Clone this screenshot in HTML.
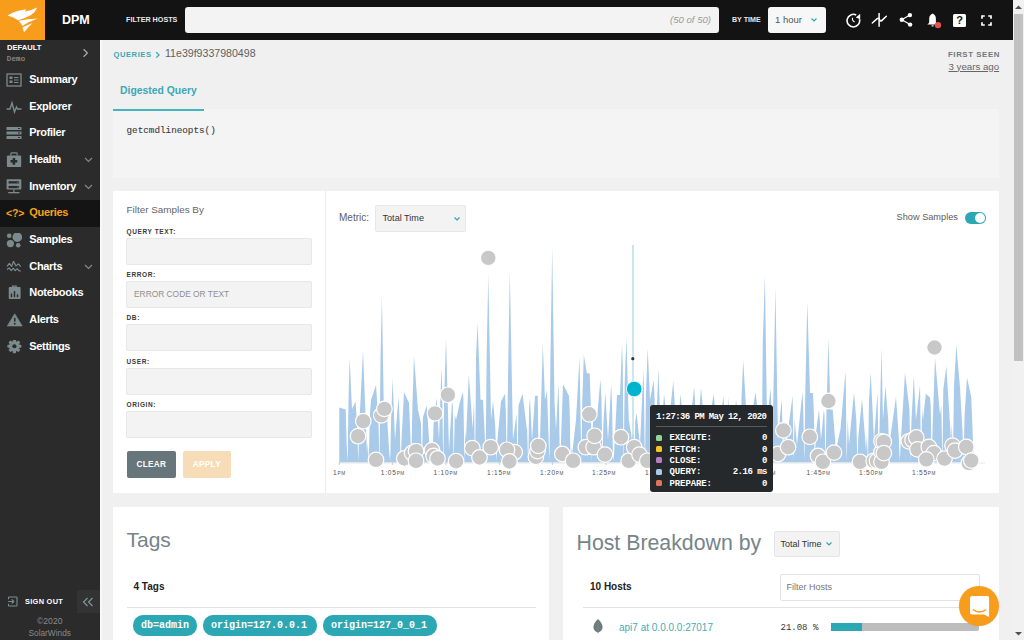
<!DOCTYPE html>
<html><head><meta charset="utf-8">
<style>
*{box-sizing:border-box;margin:0;padding:0}
html,body{width:1024px;height:640px;overflow:hidden;background:#f0f0f0;font-family:"Liberation Sans",sans-serif;}
.a{position:absolute;white-space:nowrap}
#hdr{position:absolute;left:0;top:0;width:1013px;height:40px;background:#131313}
#side{position:absolute;left:0;top:40px;width:100px;height:600px;background:#2b2b2b}
.card{position:absolute;background:#fff}
.lbl{position:absolute;font-size:6.5px;font-weight:bold;letter-spacing:0.62px;color:#3a3a3a;white-space:nowrap}
.inp{position:absolute;left:126px;width:186px;height:27px;background:#f3f3f3;border:1px solid #e7e7e7;border-radius:2px}
.nav{position:absolute;left:0;width:100px;height:27px;color:#fff;font-weight:bold;font-size:11px;letter-spacing:-0.32px}
.nav span{position:absolute;left:29.3px;top:6.3px}
.nav svg{position:absolute;left:6px;top:6px}
.nav svg.chev{position:absolute;left:84px;top:10px}
.tick{position:absolute;top:468.8px;font-size:6.6px;color:#555;white-space:nowrap;letter-spacing:0.75px}
.tick small{font-size:4.7px;letter-spacing:0.6px}
.pill{position:absolute;top:615px;height:21px;background:#2ca8b4;border-radius:10px;color:#fff;font-family:"Liberation Mono",monospace;font-weight:bold;font-size:10px;padding-left:8px;line-height:21px}
</style></head>
<body>
<div id="hdr">
  <div class="a" style="left:0;top:0;width:45px;height:40px;background:#f89c1c">
    <svg width="45" height="40" viewBox="0 0 45 40">
      <path d="M7.5 15.5 Q15 10.5 26 9.2 L25.3 11.6 Q31 10.5 37.3 7.6 Q35.5 12 31 15 Q25 18.5 18 20.2 Q14 17 7.5 15.5Z" fill="#fff"/>
      <path d="M18.5 20.8 Q28 18.8 37.5 18.4 Q33 20.5 28 22.5 Q25 24 22.5 26 Q20.5 23 18.5 20.8Z" fill="#fff"/>
      <path d="M22.5 27.5 Q27 25 32.5 23 Q28 27.5 24 32.2 Q23.5 30 22.5 27.5Z" fill="#fff"/>
    </svg>
  </div>
  <div class="a" style="left:62px;top:12.5px;color:#fff;font-size:12.5px;font-weight:bold;">DPM</div>
  <div class="a" style="left:126px;top:15px;color:#e8e8e8;font-size:7.2px;font-weight:bold;">FILTER HOSTS</div>
  <div class="a" style="left:185px;top:7px;width:534px;height:26px;background:#f3f3f3;border-radius:3px"></div>
  <div class="a" style="left:670px;top:14px;color:#9a9a9a;font-size:9.6px;font-style:italic">(50 of 50)</div>
  <div class="a" style="left:732px;top:15.8px;color:#e8e8e8;font-size:7.1px;font-weight:bold;">BY TIME</div>
  <div class="a" style="left:768px;top:7px;width:58px;height:26px;background:#f7f7f7;border-radius:3px"></div>
  <div class="a" style="left:775px;top:14px;color:#555;font-size:9.5px">1 hour</div>
  <svg class="a" style="left:810px;top:16.8px" width="8" height="6" viewBox="0 0 8 6"><path d="M1.5 1.5 L4 4 L6.5 1.5" stroke="#2ca8b4" stroke-width="1.2" fill="none"/></svg>
  <!-- icons -->
  <svg class="a" style="left:845px;top:12px" width="16" height="16" viewBox="0 0 16 16">
    <path d="M14.5 7.2 A6.3 6.3 0 1 1 11.2 3" stroke="#fff" stroke-width="1.6" fill="none"/>
    <path d="M10.8 5.6 L15.2 1.8 L15.2 7.2 Z" fill="#fff"/>
    <path d="M7.5 5.8 V7.8 Q7.6 9 9.6 9.9" stroke="#fff" stroke-width="1.1" fill="none"/>
  </svg>
  <svg class="a" style="left:871px;top:12px" width="17" height="16" viewBox="0 0 17 16">
    <path d="M1.3 11 L6.2 6.6 Q7.7 5.4 8.8 8.2 Q9.6 9.8 11 8.4 L15.3 4.3" stroke="#fff" stroke-width="1.5" fill="none" stroke-linecap="round"/>
    <path d="M8.1 1 V14.8" stroke="#fff" stroke-width="1.5"/>
  </svg>
  <svg class="a" style="left:899px;top:12px" width="15" height="16" viewBox="0 0 15 16">
    <circle cx="2.8" cy="7.8" r="2.2" fill="#fff"/><circle cx="10.9" cy="3.1" r="2.2" fill="#fff"/><circle cx="11.1" cy="12.6" r="2.2" fill="#fff"/>
    <path d="M2.8 7.8 L10.9 3.1 M2.8 7.8 L11.1 12.6" stroke="#fff" stroke-width="1.2"/>
  </svg>
  <svg class="a" style="left:925px;top:12px" width="18" height="17" viewBox="0 0 18 17">
    <path d="M7.6 1.5 C6 2.3 4.3 3.5 4.2 6.5 L4.2 10 Q4 11.5 2.2 12.6 H12.8 Q11 11.5 10.9 10 L10.9 6.5 C10.8 3.5 9.2 2.3 7.6 1.5Z" fill="#fff"/>
    <path d="M6.6 12.6 H8.6 V14.6 H6.6Z" fill="#bbb"/>
    <circle cx="13" cy="13.1" r="3.2" fill="#e8514f"/>
  </svg>
  <div class="a" style="left:953px;top:14px;width:13px;height:12.5px;background:#fff;border-radius:1.5px;color:#131313;font-weight:bold;font-size:11px;line-height:13px;text-align:center">?</div>
  <svg class="a" style="left:980.5px;top:14.5px" width="11" height="11" viewBox="0 0 11 11">
    <path d="M1 3.8 V1 H3.8 M7.2 1 H10 V3.8 M10 7.2 V10 H7.2 M3.8 10 H1 V7.2" stroke="#fff" stroke-width="1.7" fill="none"/>
  </svg>
</div>
<!-- scrollbar -->
<div class="a" style="left:1013px;top:0;width:11px;height:640px;background:#f1f1f1"></div>
<div class="a" style="left:1014px;top:14px;width:9px;height:347px;background:#c1c1c1"></div>
<svg class="a" style="left:1013px;top:3px" width="11" height="8"><path d="M2 6 L5.5 2.5 L9 6Z" fill="#505050"/></svg>
<svg class="a" style="left:1013px;top:630px" width="11" height="8"><path d="M2 2 L5.5 5.5 L9 2Z" fill="#505050"/></svg>
<div id="side">
  <div class="a" style="left:7px;top:3px;color:#fff;font-size:7.6px;font-weight:bold">DEFAULT</div>
  <div class="a" style="left:6.8px;top:15px;color:#8e8e8e;font-size:7.4px;font-family:'Liberation Mono',monospace;letter-spacing:0.2px;-webkit-text-stroke:0.2px #8e8e8e">Demo</div>
  <svg class="a" style="left:82px;top:8px" width="8" height="10"><path d="M1.6 1.3 L5.4 5 L1.6 8.7" stroke="#aaa" stroke-width="1.2" fill="none"/></svg>
</div>
<!-- nav items (page coords) -->
<div class="nav" style="top:67px">
  <svg width="16" height="14" viewBox="0 0 16 14"><rect x="1" y="1" width="14" height="12" fill="none" stroke="#7b8a8d" stroke-width="1.3"/><rect x="3.5" y="3.5" width="3" height="2.5" fill="#7b8a8d"/><rect x="3.5" y="7.5" width="3" height="2.5" fill="#7b8a8d"/><path d="M8 4.5 H12.5 M8 7 H12.5 M8 9.5 H12.5" stroke="#7b8a8d" stroke-width="1"/></svg>
  <span>Summary</span></div>
<div class="nav" style="top:94px">
  <svg width="16" height="14" viewBox="0 0 16 14"><path d="M0.5 9 H4 L6 3 L8.5 12 L10.5 7 L11.5 9 H15.5" stroke="#7b8a8d" stroke-width="1.4" fill="none"/></svg>
  <span>Explorer</span></div>
<div class="nav" style="top:120px">
  <svg width="16" height="14" viewBox="0 0 16 14"><rect x="0.5" y="1" width="15" height="3" fill="#7b8a8d"/><rect x="0.5" y="5.5" width="15" height="3" fill="#7b8a8d"/><rect x="0.5" y="10" width="15" height="3" fill="#7b8a8d"/><path d="M12 2.5 H14 M12 7 H14 M12 11.5 H14" stroke="#2b2b2b" stroke-width="1"/></svg>
  <span>Profiler</span></div>
<div class="nav" style="top:147px">
  <svg width="16" height="17" viewBox="0 0 16 17" style="top:5px"><rect x="0.9" y="3.4" width="14.3" height="11.7" rx="1.2" fill="#7b8a8d"/><path d="M4.9 3.6 V1.6 Q4.9 0.9 5.6 0.9 H10.4 Q11.1 0.9 11.1 1.6 V3.6" stroke="#7b8a8d" stroke-width="1.2" fill="none"/><path d="M7.9 5.9 V12.7 M4.5 9.3 H11.3" stroke="#2b2b2b" stroke-width="2.6"/></svg>
  <span>Health</span>
  <svg class="chev" width="9" height="6" viewBox="0 0 9 6"><path d="M1 1 L4.5 4.5 L8 1" stroke="#8a8a8a" stroke-width="1.1" fill="none"/></svg></div>
<div class="nav" style="top:174px">
  <svg width="16" height="16" viewBox="0 0 16 16" style="top:5px"><rect x="0.6" y="0.3" width="14.7" height="10.1" rx="0.6" fill="#7b8a8d"/><rect x="2.6" y="2.2" width="10.5" height="2.3" fill="#2b2b2b"/><rect x="2.6" y="6.9" width="10.5" height="2.3" fill="#2b2b2b"/><circle cx="12" cy="3.35" r="0.6" fill="#7b8a8d"/><circle cx="12" cy="8.05" r="0.6" fill="#7b8a8d"/><path d="M7.9 10.4 V13" stroke="#7b8a8d" stroke-width="1.2"/><rect x="2.2" y="13" width="11.3" height="1.3" fill="#7b8a8d"/></svg>
  <span>Inventory</span>
  <svg class="chev" width="9" height="6" viewBox="0 0 9 6"><path d="M1 1 L4.5 4.5 L8 1" stroke="#8a8a8a" stroke-width="1.1" fill="none"/></svg></div>
<div class="nav" style="top:200px;height:26.5px;background:#141414;color:#f7a11b">
  <div class="a" style="left:6px;top:6.5px;font-size:10.5px;font-weight:bold;color:#f7a11b;letter-spacing:-0.2px">&lt;?&gt;</div>
  <span>Queries</span></div>
<div class="nav" style="top:227px">
  <svg width="16" height="16" viewBox="0 0 16 16"><circle cx="11.3" cy="4.2" r="4.8" fill="#7b8a8d"/><circle cx="3.2" cy="2.8" r="2.3" fill="#7b8a8d"/><circle cx="4.4" cy="10.6" r="3.6" fill="#7b8a8d"/><circle cx="12.2" cy="12.3" r="2.3" fill="#7b8a8d"/></svg>
  <span>Samples</span></div>
<div class="nav" style="top:254px">
  <svg width="16" height="14" viewBox="0 0 16 14"><path d="M1 6.3 L3.4 3.5 L5.7 6.3 L7.4 1.4 L10 5.9 L12.4 3.9 L14.7 6.7" stroke="#7b8a8d" stroke-width="1.2" fill="none" stroke-linejoin="round"/><path d="M1 9.4 L3.2 8 L5.3 10.6 L7.3 8.2 L9.2 10.6 L11.2 8.6 L12.9 10.6 L14.7 11.2" stroke="#7b8a8d" stroke-width="1.2" fill="none" stroke-linejoin="round"/></svg>
  <span>Charts</span>
  <svg class="chev" width="9" height="6" viewBox="0 0 9 6"><path d="M1 1 L4.5 4.5 L8 1" stroke="#8a8a8a" stroke-width="1.1" fill="none"/></svg></div>
<div class="nav" style="top:280px">
  <svg width="16" height="15" viewBox="0 0 16 15" style="top:5px"><rect x="2.75" y="2.1" width="11.85" height="11.9" rx="1" fill="#7b8a8d"/><path d="M6.5 2.3 V1.2 H10.2 V2.3" stroke="#7b8a8d" stroke-width="1.2" fill="none"/><path d="M5.5 12.3 V8.5 M8.5 12.3 V6 M11.5 12.3 V9.2" stroke="#2b2b2b" stroke-width="1.4"/></svg>
  <span>Notebooks</span></div>
<div class="nav" style="top:307px">
  <svg width="18" height="15" viewBox="0 0 18 15"><path d="M8.75 0.75 L16.25 13 H1.25Z" fill="#7b8a8d" stroke="#7b8a8d" stroke-width="0.6" stroke-linejoin="round"/><path d="M8.75 4.8 V8.6" stroke="#2b2b2b" stroke-width="1.6"/><circle cx="8.75" cy="10.7" r="0.95" fill="#2b2b2b"/></svg>
  <span>Alerts</span></div>
<div class="nav" style="top:334px">
  <svg width="17" height="15" viewBox="0 0 17 15"><g transform="translate(8.4 6.25)"><circle r="5.2" fill="#7b8a8d"/><rect x="-1.6" y="-6.9" width="3.2" height="13.8" rx="0.6" fill="#7b8a8d" transform="rotate(0)"/><rect x="-1.6" y="-6.9" width="3.2" height="13.8" rx="0.6" fill="#7b8a8d" transform="rotate(45)"/><rect x="-1.6" y="-6.9" width="3.2" height="13.8" rx="0.6" fill="#7b8a8d" transform="rotate(90)"/><rect x="-1.6" y="-6.9" width="3.2" height="13.8" rx="0.6" fill="#7b8a8d" transform="rotate(135)"/><circle r="2.1" fill="#2b2b2b"/></g></svg>
  <span>Settings</span></div>
<!-- bottom -->
<svg class="a" style="left:7px;top:596px" width="12" height="12" viewBox="0 0 12 12"><path d="M1.5 3.3 V1.6 Q1.5 1 2.1 1 H9.4 Q10 1 10 1.6 V9.4 Q10 10 9.4 10 H2.1 Q1.5 10 1.5 9.4 V7.7" stroke="#7f8d90" stroke-width="1.1" fill="none"/><path d="M1.2 5.5 H6.8 M4.7 3.4 L6.8 5.5 L4.7 7.6" stroke="#7f8d90" stroke-width="1.1" fill="none"/></svg>
<div class="a" style="left:25px;top:597px;color:#fff;font-size:7.4px;font-weight:bold;letter-spacing:0.3px">SIGN OUT</div>
<div class="a" style="left:77px;top:590px;width:23px;height:23px;background:#333"></div>
<svg class="a" style="left:82px;top:596px" width="12" height="12" viewBox="0 0 12 12"><path d="M5.5 2 L1.5 6 L5.5 10 M10.5 2 L6.5 6 L10.5 10" stroke="#8a9799" stroke-width="1.1" fill="none"/></svg>
<div class="a" style="left:37px;top:616px;color:#8a8a8a;font-size:8.6px">©2020</div>
<div class="a" style="left:28.5px;top:627.5px;color:#8a8a8a;font-size:8.3px">SolarWinds</div>
<!-- main left edge line -->
<div class="a" style="left:100px;top:40px;width:2px;height:600px;background:#f8f8f8"></div>
<div class="a" style="left:113.5px;top:49.8px;color:#3aa8b6;font-size:7.6px;font-weight:bold;letter-spacing:0.55px">QUERIES</div>
<svg class="a" style="left:155px;top:51px" width="6" height="8" viewBox="0 0 6 8"><path d="M1.2 1.2 L4 3.9 L1.2 6.6" stroke="#3aa8b6" stroke-width="1.3" fill="none"/></svg>
<div class="a" style="left:165px;top:47.3px;color:#5f5f5f;font-size:10.6px">11e39f9337980498</div>
<div class="a" style="left:948px;top:50px;color:#6b7a80;font-size:7.8px;font-weight:bold;letter-spacing:0.6px">FIRST SEEN</div>
<div class="a" style="left:948.5px;top:60.5px;color:#666;font-size:9.7px;text-decoration:underline">3 years ago</div>
<div class="a" style="left:120px;top:84.5px;color:#3aa8b6;font-size:10.4px;font-weight:bold">Digested Query</div>
<div class="a" style="left:113px;top:109px;width:886px;height:69px;background:#f4f4f4"></div>
<div class="a" style="left:113px;top:109px;width:91px;height:2px;background:#44b4c0"></div>
<div class="a" style="left:126.5px;top:125px;color:#3c3c3c;font-size:9.3px;-webkit-text-stroke:0.1px #3c3c3c;font-family:'Liberation Mono',monospace">getcmdlineopts()</div>

<!-- filter card -->
<div class="card" style="left:113px;top:191px;width:886px;height:302px"></div>
<div class="a" style="left:325px;top:191px;width:1px;height:302px;background:#ececec"></div>
<div class="a" style="left:126.5px;top:203.5px;color:#666;font-size:9.9px">Filter Samples By</div>
<div class="lbl" style="left:126.5px;top:227.8px">QUERY TEXT:</div>
<div class="inp" style="top:238px"></div>
<div class="lbl" style="left:126.5px;top:271.2px">ERROR:</div>
<div class="inp" style="top:281px"></div>
<div class="a" style="left:134px;top:289.2px;color:#8f8f8f;font-size:8.4px">ERROR CODE OR TEXT</div>
<div class="lbl" style="left:126.5px;top:314.3px">DB:</div>
<div class="inp" style="top:324px"></div>
<div class="lbl" style="left:126.5px;top:357.6px">USER:</div>
<div class="inp" style="top:368px"></div>
<div class="lbl" style="left:126.5px;top:400.8px">ORIGIN:</div>
<div class="inp" style="top:411px"></div>
<div class="a" style="left:126.6px;top:451px;width:49.4px;height:27px;background:#66767b;border-radius:2px;color:#fff;font-size:8.2px;font-weight:bold;text-align:center;line-height:28.6px;letter-spacing:0.3px">CLEAR</div>
<div class="a" style="left:182.6px;top:451.2px;width:48.6px;height:27px;background:#f6ddb8;border-radius:2px;color:#fff;font-size:8.2px;font-weight:bold;text-align:center;line-height:28.6px;letter-spacing:0.3px">APPLY</div>

<div class="a" style="left:339px;top:212px;color:#606060;font-size:10px">Metric:</div>
<div class="a" style="left:375px;top:204.5px;width:91px;height:27px;background:#f3f3f3;border:1px solid #e7e7e7;border-radius:2px"></div>
<div class="a" style="left:382.5px;top:212.5px;color:#333;font-size:9.1px">Total Time</div>
<svg class="a" style="left:452.8px;top:215.5px" width="8" height="6" viewBox="0 0 8 6"><path d="M1.5 1.5 L4 4 L6.5 1.5" stroke="#2ca8b4" stroke-width="1.2" fill="none"/></svg>
<div class="a" style="left:896.6px;top:212.3px;color:#5c5c5c;font-size:9.2px">Show Samples</div>
<div class="a" style="left:964.5px;top:211.7px;width:21.6px;height:12.4px;background:#2ca8b4;border-radius:6.2px"></div>
<div class="a" style="left:974.9px;top:212.6px;width:10.5px;height:10.5px;background:#fff;border-radius:5.25px"></div>
<svg class="a" style="left:0;top:0" width="1024" height="640" viewBox="0 0 1024 640">
<path d="M339.3 462.5 L339.30 407.5 L345.70 409.5 L346.58 442.3 L347.58 461.5 L348.58 397.2 L349.60 358.0 L352.00 409.0 L355.50 401.6 L357.20 425.7 L358.20 461.5 L359.20 426.6 L363.00 350.3 L367.00 454.0 L367.82 442.9 L368.82 461.5 L369.82 415.9 L371.00 400.0 L376.00 385.0 L378.44 421.6 L379.44 461.5 L380.44 363.3 L381.90 295.6 L384.00 420.0 L386.00 400.0 L389.06 449.6 L390.06 461.5 L391.06 421.5 L392.60 378.0 L395.00 440.0 L398.50 396.8 L399.68 421.9 L400.68 461.5 L401.68 436.9 L404.00 392.0 L409.00 403.0 L410.30 433.5 L411.30 461.5 L412.30 409.3 L414.00 356.0 L418.00 410.0 L420.92 422.7 L421.92 461.5 L422.92 417.2 L426.80 405.5 L430.00 455.0 L431.54 441.6 L432.54 461.5 L433.54 424.3 L436.60 397.7 L439.00 440.0 L441.40 368.4 L442.16 387.1 L443.16 461.5 L444.16 398.5 L446.00 338.5 L449.00 450.0 L452.00 401.6 L452.78 405.2 L453.78 461.5 L454.78 414.4 L456.00 420.0 L460.00 401.6 L463.00 392.0 L463.40 398.4 L464.40 461.5 L465.40 430.4 L466.00 440.0 L468.80 374.3 L472.70 429.0 L474.02 400.4 L475.02 461.5 L476.02 357.1 L477.60 322.9 L480.50 399.7 L483.00 399.7 L484.64 432.7 L485.64 461.5 L486.64 357.5 L488.30 274.0 L491.00 420.0 L493.00 401.0 L495.26 425.9 L496.26 461.5 L497.26 442.2 L501.00 401.6 L505.00 393.8 L505.88 414.1 L506.88 461.5 L507.88 386.9 L509.80 271.2 L513.00 440.0 L516.50 413.8 L517.50 461.5 L518.50 405.6 L522.50 393.8 L527.00 430.0 L527.12 428.7 L528.12 461.5 L529.12 407.4 L530.00 398.0 L532.00 440.0 L535.00 395.8 L537.74 395.8 L538.74 461.5 L539.74 434.3 L540.00 440.0 L542.80 343.4 L545.00 400.0 L547.00 390.0 L548.36 430.8 L549.36 461.5 L550.36 363.6 L552.20 246.7 L554.50 401.6 L556.00 430.0 L558.40 384.0 L558.98 405.5 L559.98 461.5 L560.98 441.5 L563.00 384.0 L569.00 396.0 L569.60 407.8 L570.60 461.5 L571.60 447.1 L572.00 455.0 L576.00 420.0 L579.50 356.7 L580.22 396.7 L581.22 461.5 L582.22 402.9 L583.80 354.8 L586.80 373.3 L589.70 373.3 L590.84 406.4 L591.84 461.5 L592.84 425.8 L593.60 413.0 L597.50 413.0 L600.40 379.0 L601.46 399.8 L602.46 461.5 L603.46 422.4 L605.30 392.0 L608.00 440.0 L611.20 384.0 L612.08 406.3 L613.08 461.5 L614.08 453.4 L617.00 395.0 L620.00 395.0 L622.00 344.4 L622.70 363.9 L623.70 461.5 L624.70 381.8 L626.40 337.6 L628.70 419.0 L632.00 440.0 L633.32 432.3 L634.32 461.5 L635.32 420.5 L636.60 413.0 L640.00 445.0 L643.40 370.0 L643.94 386.9 L644.94 461.5 L645.94 395.0 L647.70 348.3 L650.00 400.0 L653.70 380.0 L654.56 398.7 L655.56 461.5 L656.56 415.6 L658.40 368.4 L661.00 440.0 L664.00 394.0 L665.18 404.6 L666.18 461.5 L667.18 422.6 L668.00 430.0 L673.30 381.0 L675.80 420.9 L676.80 461.5 L677.80 429.5 L680.50 394.0 L684.00 430.0 L686.42 436.0 L687.42 461.5 L688.42 436.4 L694.20 387.0 L697.00 440.0 L697.04 439.5 L698.04 461.5 L699.04 413.5 L701.00 388.0 L706.00 440.0 L707.66 430.1 L708.66 461.5 L709.66 418.1 L713.70 394.0 L718.00 440.0 L718.28 437.8 L719.28 461.5 L720.28 421.8 L723.50 396.0 L726.00 440.0 L728.90 396.9 L729.90 461.5 L730.90 412.2 L733.00 440.0 L736.00 400.0 L739.52 426.4 L740.52 461.5 L741.52 397.0 L743.20 360.6 L748.00 440.0 L750.14 426.3 L751.14 461.5 L752.14 413.5 L755.50 392.0 L760.00 430.0 L760.76 406.0 L761.76 461.5 L762.76 342.7 L764.90 275.0 L767.00 420.0 L770.70 388.0 L771.38 407.6 L772.38 461.5 L773.38 393.8 L775.40 287.8 L778.00 440.0 L781.50 400.7 L782.00 405.6 L783.00 461.5 L784.00 425.3 L786.00 445.0 L792.60 395.8 L792.62 396.0 L793.62 461.5 L794.62 418.4 L797.00 445.0 L802.40 392.0 L803.24 407.2 L804.24 461.5 L805.24 396.0 L807.30 301.4 L810.00 392.9 L813.00 392.9 L813.86 413.2 L814.86 461.5 L815.86 433.4 L819.00 409.5 L821.00 440.0 L823.90 409.5 L824.48 415.2 L825.48 461.5 L826.48 411.7 L828.40 338.5 L830.50 410.0 L832.70 409.5 L835.10 439.0 L836.10 461.5 L837.10 444.9 L840.50 429.0 L845.40 372.3 L845.72 378.8 L846.72 461.5 L847.72 419.2 L849.00 445.0 L854.00 392.0 L856.34 420.1 L857.34 461.5 L858.34 436.5 L862.00 398.7 L866.00 450.0 L866.96 434.1 L867.96 461.5 L868.96 401.1 L870.70 372.3 L874.00 440.0 L877.58 392.3 L878.58 461.5 L879.58 426.7 L881.50 348.3 L883.00 420.0 L885.40 386.0 L888.20 418.9 L889.20 461.5 L890.20 438.6 L896.00 396.8 L898.82 437.8 L899.82 461.5 L900.82 441.5 L905.00 372.5 L908.80 403.8 L909.44 411.4 L910.44 461.5 L911.44 421.5 L913.80 376.0 L916.00 420.0 L920.00 385.0 L920.06 385.7 L921.06 461.5 L922.06 409.0 L923.00 420.0 L925.80 393.8 L930.00 397.5 L930.68 406.3 L931.68 461.5 L932.68 424.8 L935.00 357.5 L940.00 415.0 L941.30 404.9 L942.30 461.5 L943.30 389.3 L946.30 366.0 L951.00 440.0 L951.92 423.5 L952.92 461.5 L953.92 387.7 L956.30 345.0 L960.00 387.5 L962.54 431.9 L963.54 461.5 L964.54 415.9 L967.00 377.5 L971.30 397.5 L973.8 462.5Z" fill="#a9cae9"/>
<path d="M347.08 240 L348.08 240 L347.68 455 L347.48 455Z" fill="#fff"/>
<path d="M357.70 240 L358.70 240 L358.30 455 L358.10 455Z" fill="#fff"/>
<path d="M368.32 240 L369.32 240 L368.92 455 L368.72 455Z" fill="#fff"/>
<path d="M378.94 240 L379.94 240 L379.54 455 L379.34 455Z" fill="#fff"/>
<path d="M389.56 240 L390.56 240 L390.16 455 L389.96 455Z" fill="#fff"/>
<path d="M400.18 240 L401.18 240 L400.78 455 L400.58 455Z" fill="#fff"/>
<path d="M410.80 240 L411.80 240 L411.40 455 L411.20 455Z" fill="#fff"/>
<path d="M421.42 240 L422.42 240 L422.02 455 L421.82 455Z" fill="#fff"/>
<path d="M432.04 240 L433.04 240 L432.64 455 L432.44 455Z" fill="#fff"/>
<path d="M442.66 240 L443.66 240 L443.26 455 L443.06 455Z" fill="#fff"/>
<path d="M453.28 240 L454.28 240 L453.88 455 L453.68 455Z" fill="#fff"/>
<path d="M463.90 240 L464.90 240 L464.50 455 L464.30 455Z" fill="#fff"/>
<path d="M474.52 240 L475.52 240 L475.12 455 L474.92 455Z" fill="#fff"/>
<path d="M485.14 240 L486.14 240 L485.74 455 L485.54 455Z" fill="#fff"/>
<path d="M495.76 240 L496.76 240 L496.36 455 L496.16 455Z" fill="#fff"/>
<path d="M506.38 240 L507.38 240 L506.98 455 L506.78 455Z" fill="#fff"/>
<path d="M517.00 240 L518.00 240 L517.60 455 L517.40 455Z" fill="#fff"/>
<path d="M527.62 240 L528.62 240 L528.22 455 L528.02 455Z" fill="#fff"/>
<path d="M538.24 240 L539.24 240 L538.84 455 L538.64 455Z" fill="#fff"/>
<path d="M548.86 240 L549.86 240 L549.46 455 L549.26 455Z" fill="#fff"/>
<path d="M559.48 240 L560.48 240 L560.08 455 L559.88 455Z" fill="#fff"/>
<path d="M570.10 240 L571.10 240 L570.70 455 L570.50 455Z" fill="#fff"/>
<path d="M580.72 240 L581.72 240 L581.32 455 L581.12 455Z" fill="#fff"/>
<path d="M591.34 240 L592.34 240 L591.94 455 L591.74 455Z" fill="#fff"/>
<path d="M601.96 240 L602.96 240 L602.56 455 L602.36 455Z" fill="#fff"/>
<path d="M612.58 240 L613.58 240 L613.18 455 L612.98 455Z" fill="#fff"/>
<path d="M623.20 240 L624.20 240 L623.80 455 L623.60 455Z" fill="#fff"/>
<path d="M633.82 240 L634.82 240 L634.42 455 L634.22 455Z" fill="#fff"/>
<path d="M644.44 240 L645.44 240 L645.04 455 L644.84 455Z" fill="#fff"/>
<path d="M655.06 240 L656.06 240 L655.66 455 L655.46 455Z" fill="#fff"/>
<path d="M665.68 240 L666.68 240 L666.28 455 L666.08 455Z" fill="#fff"/>
<path d="M676.30 240 L677.30 240 L676.90 455 L676.70 455Z" fill="#fff"/>
<path d="M686.92 240 L687.92 240 L687.52 455 L687.32 455Z" fill="#fff"/>
<path d="M697.54 240 L698.54 240 L698.14 455 L697.94 455Z" fill="#fff"/>
<path d="M708.16 240 L709.16 240 L708.76 455 L708.56 455Z" fill="#fff"/>
<path d="M718.78 240 L719.78 240 L719.38 455 L719.18 455Z" fill="#fff"/>
<path d="M729.40 240 L730.40 240 L730.00 455 L729.80 455Z" fill="#fff"/>
<path d="M740.02 240 L741.02 240 L740.62 455 L740.42 455Z" fill="#fff"/>
<path d="M750.64 240 L751.64 240 L751.24 455 L751.04 455Z" fill="#fff"/>
<path d="M761.26 240 L762.26 240 L761.86 455 L761.66 455Z" fill="#fff"/>
<path d="M771.88 240 L772.88 240 L772.48 455 L772.28 455Z" fill="#fff"/>
<path d="M782.50 240 L783.50 240 L783.10 455 L782.90 455Z" fill="#fff"/>
<path d="M793.12 240 L794.12 240 L793.72 455 L793.52 455Z" fill="#fff"/>
<path d="M803.74 240 L804.74 240 L804.34 455 L804.14 455Z" fill="#fff"/>
<path d="M814.36 240 L815.36 240 L814.96 455 L814.76 455Z" fill="#fff"/>
<path d="M824.98 240 L825.98 240 L825.58 455 L825.38 455Z" fill="#fff"/>
<path d="M835.60 240 L836.60 240 L836.20 455 L836.00 455Z" fill="#fff"/>
<path d="M846.22 240 L847.22 240 L846.82 455 L846.62 455Z" fill="#fff"/>
<path d="M856.84 240 L857.84 240 L857.44 455 L857.24 455Z" fill="#fff"/>
<path d="M867.46 240 L868.46 240 L868.06 455 L867.86 455Z" fill="#fff"/>
<path d="M878.08 240 L879.08 240 L878.68 455 L878.48 455Z" fill="#fff"/>
<path d="M888.70 240 L889.70 240 L889.30 455 L889.10 455Z" fill="#fff"/>
<path d="M899.32 240 L900.32 240 L899.92 455 L899.72 455Z" fill="#fff"/>
<path d="M909.94 240 L910.94 240 L910.54 455 L910.34 455Z" fill="#fff"/>
<path d="M920.56 240 L921.56 240 L921.16 455 L920.96 455Z" fill="#fff"/>
<path d="M931.18 240 L932.18 240 L931.78 455 L931.58 455Z" fill="#fff"/>
<path d="M941.80 240 L942.80 240 L942.40 455 L942.20 455Z" fill="#fff"/>
<path d="M952.42 240 L953.42 240 L953.02 455 L952.82 455Z" fill="#fff"/>
<path d="M963.04 240 L964.04 240 L963.64 455 L963.44 455Z" fill="#fff"/>
<path d="M339 463.0 H985" stroke="#e6e6e6" stroke-width="1"/>
<path d="M339.4 462 V465" stroke="#ccc" stroke-width="1"/>
<path d="M392.7 462 V465" stroke="#ccc" stroke-width="1"/>
<path d="M446.0 462 V465" stroke="#ccc" stroke-width="1"/>
<path d="M499.3 462 V465" stroke="#ccc" stroke-width="1"/>
<path d="M552.6 462 V465" stroke="#ccc" stroke-width="1"/>
<path d="M605.9 462 V465" stroke="#ccc" stroke-width="1"/>
<path d="M659.2 462 V465" stroke="#ccc" stroke-width="1"/>
<path d="M712.5 462 V465" stroke="#ccc" stroke-width="1"/>
<path d="M765.8 462 V465" stroke="#ccc" stroke-width="1"/>
<path d="M819.1 462 V465" stroke="#ccc" stroke-width="1"/>
<path d="M872.4 462 V465" stroke="#ccc" stroke-width="1"/>
<path d="M925.7 462 V465" stroke="#ccc" stroke-width="1"/>
<path d="M633 245 V462" stroke="#94cfdb" stroke-width="1"/>
<circle cx="632.8" cy="358.7" r="1.6" fill="#333"/>
<circle cx="358.0" cy="436.2" r="7.8" fill="#c8c8c8" stroke="#fff" stroke-width="1.2"/>
<circle cx="363.3" cy="421.2" r="7.8" fill="#c8c8c8" stroke="#fff" stroke-width="1.2"/>
<circle cx="376.0" cy="459.90000000000003" r="7.8" fill="#c8c8c8" stroke="#fff" stroke-width="1.2"/>
<circle cx="381.3" cy="415.3" r="7.8" fill="#c8c8c8" stroke="#fff" stroke-width="1.2"/>
<circle cx="384.4" cy="408.9" r="7.8" fill="#c8c8c8" stroke="#fff" stroke-width="1.2"/>
<circle cx="404.3" cy="458.5" r="7.8" fill="#c8c8c8" stroke="#fff" stroke-width="1.2"/>
<circle cx="412.1" cy="453.0" r="7.8" fill="#c8c8c8" stroke="#fff" stroke-width="1.2"/>
<circle cx="416.0" cy="451.1" r="7.8" fill="#c8c8c8" stroke="#fff" stroke-width="1.2"/>
<circle cx="416.0" cy="460.8" r="7.8" fill="#c8c8c8" stroke="#fff" stroke-width="1.2"/>
<circle cx="432.0" cy="450.1" r="7.8" fill="#c8c8c8" stroke="#fff" stroke-width="1.2"/>
<circle cx="435.0" cy="413.4" r="7.8" fill="#c8c8c8" stroke="#fff" stroke-width="1.2"/>
<circle cx="433.6" cy="456.0" r="7.8" fill="#c8c8c8" stroke="#fff" stroke-width="1.2"/>
<circle cx="437.5" cy="458.5" r="7.8" fill="#c8c8c8" stroke="#fff" stroke-width="1.2"/>
<circle cx="447.9" cy="394.8" r="7.8" fill="#c8c8c8" stroke="#fff" stroke-width="1.2"/>
<circle cx="456.1" cy="461.20000000000005" r="7.8" fill="#c8c8c8" stroke="#fff" stroke-width="1.2"/>
<circle cx="472.3" cy="448.1" r="7.8" fill="#c8c8c8" stroke="#fff" stroke-width="1.2"/>
<circle cx="479.5" cy="457.5" r="7.8" fill="#c8c8c8" stroke="#fff" stroke-width="1.2"/>
<circle cx="490.7" cy="447.20000000000005" r="7.8" fill="#c8c8c8" stroke="#fff" stroke-width="1.2"/>
<circle cx="514.7" cy="452.20000000000005" r="7.8" fill="#c8c8c8" stroke="#fff" stroke-width="1.2"/>
<circle cx="507.0" cy="449.8" r="7.8" fill="#c8c8c8" stroke="#fff" stroke-width="1.2"/>
<circle cx="509.4" cy="461.5" r="7.8" fill="#c8c8c8" stroke="#fff" stroke-width="1.2"/>
<circle cx="488.3" cy="257.9" r="7.8" fill="#c8c8c8" stroke="#fff" stroke-width="1.2"/>
<circle cx="535.9" cy="456.8" r="7.8" fill="#c8c8c8" stroke="#fff" stroke-width="1.2"/>
<circle cx="537.5" cy="451.1" r="7.8" fill="#c8c8c8" stroke="#fff" stroke-width="1.2"/>
<circle cx="538.3" cy="445.90000000000003" r="7.8" fill="#c8c8c8" stroke="#fff" stroke-width="1.2"/>
<circle cx="562.3" cy="454.0" r="7.8" fill="#c8c8c8" stroke="#fff" stroke-width="1.2"/>
<circle cx="573.1" cy="460.8" r="7.8" fill="#c8c8c8" stroke="#fff" stroke-width="1.2"/>
<circle cx="589.3" cy="414.3" r="7.8" fill="#c8c8c8" stroke="#fff" stroke-width="1.2"/>
<circle cx="585.8" cy="447.20000000000005" r="7.8" fill="#c8c8c8" stroke="#fff" stroke-width="1.2"/>
<circle cx="593.6" cy="447.20000000000005" r="7.8" fill="#c8c8c8" stroke="#fff" stroke-width="1.2"/>
<circle cx="594.6" cy="435.8" r="7.8" fill="#c8c8c8" stroke="#fff" stroke-width="1.2"/>
<circle cx="604.9" cy="454.6" r="7.8" fill="#c8c8c8" stroke="#fff" stroke-width="1.2"/>
<circle cx="621.0" cy="437.2" r="7.8" fill="#c8c8c8" stroke="#fff" stroke-width="1.2"/>
<circle cx="628.7" cy="460.8" r="7.8" fill="#c8c8c8" stroke="#fff" stroke-width="1.2"/>
<circle cx="634.2" cy="447.20000000000005" r="7.8" fill="#c8c8c8" stroke="#fff" stroke-width="1.2"/>
<circle cx="639.5" cy="454.6" r="7.8" fill="#c8c8c8" stroke="#fff" stroke-width="1.2"/>
<circle cx="647.3" cy="460.8" r="7.8" fill="#c8c8c8" stroke="#fff" stroke-width="1.2"/>
<circle cx="783.4" cy="430.4" r="7.8" fill="#c8c8c8" stroke="#fff" stroke-width="1.2"/>
<circle cx="778.0" cy="454.0" r="7.8" fill="#c8c8c8" stroke="#fff" stroke-width="1.2"/>
<circle cx="788.1" cy="447.20000000000005" r="7.8" fill="#c8c8c8" stroke="#fff" stroke-width="1.2"/>
<circle cx="809.8" cy="436.8" r="7.8" fill="#c8c8c8" stroke="#fff" stroke-width="1.2"/>
<circle cx="818.0" cy="456.0" r="7.8" fill="#c8c8c8" stroke="#fff" stroke-width="1.2"/>
<circle cx="822.9" cy="461.8" r="7.8" fill="#c8c8c8" stroke="#fff" stroke-width="1.2"/>
<circle cx="834.0" cy="452.6" r="7.8" fill="#c8c8c8" stroke="#fff" stroke-width="1.2"/>
<circle cx="828.4" cy="401.0" r="7.8" fill="#c8c8c8" stroke="#fff" stroke-width="1.2"/>
<circle cx="860.0" cy="461.8" r="7.8" fill="#c8c8c8" stroke="#fff" stroke-width="1.2"/>
<circle cx="873.7" cy="460.8" r="7.8" fill="#c8c8c8" stroke="#fff" stroke-width="1.2"/>
<circle cx="877.0" cy="460.8" r="7.8" fill="#c8c8c8" stroke="#fff" stroke-width="1.2"/>
<circle cx="881.5" cy="452.0" r="7.8" fill="#c8c8c8" stroke="#fff" stroke-width="1.2"/>
<circle cx="881.5" cy="441.3" r="7.8" fill="#c8c8c8" stroke="#fff" stroke-width="1.2"/>
<circle cx="881.5" cy="461.8" r="7.8" fill="#c8c8c8" stroke="#fff" stroke-width="1.2"/>
<circle cx="883.8" cy="441.90000000000003" r="7.8" fill="#c8c8c8" stroke="#fff" stroke-width="1.2"/>
<circle cx="883.8" cy="453.1" r="7.8" fill="#c8c8c8" stroke="#fff" stroke-width="1.2"/>
<circle cx="908.8" cy="441.3" r="7.8" fill="#c8c8c8" stroke="#fff" stroke-width="1.2"/>
<circle cx="912.5" cy="440.0" r="7.8" fill="#c8c8c8" stroke="#fff" stroke-width="1.2"/>
<circle cx="916.3" cy="437.5" r="7.8" fill="#c8c8c8" stroke="#fff" stroke-width="1.2"/>
<circle cx="917.5" cy="449.40000000000003" r="7.8" fill="#c8c8c8" stroke="#fff" stroke-width="1.2"/>
<circle cx="928.8" cy="446.90000000000003" r="7.8" fill="#c8c8c8" stroke="#fff" stroke-width="1.2"/>
<circle cx="933.8" cy="453.1" r="7.8" fill="#c8c8c8" stroke="#fff" stroke-width="1.2"/>
<circle cx="926.3" cy="459.40000000000003" r="7.8" fill="#c8c8c8" stroke="#fff" stroke-width="1.2"/>
<circle cx="944.5" cy="458.6" r="7.8" fill="#c8c8c8" stroke="#fff" stroke-width="1.2"/>
<circle cx="952.5" cy="445.6" r="7.8" fill="#c8c8c8" stroke="#fff" stroke-width="1.2"/>
<circle cx="955.0" cy="450.6" r="7.8" fill="#c8c8c8" stroke="#fff" stroke-width="1.2"/>
<circle cx="966.3" cy="446.90000000000003" r="7.8" fill="#c8c8c8" stroke="#fff" stroke-width="1.2"/>
<circle cx="968.8" cy="463.1" r="7.8" fill="#c8c8c8" stroke="#fff" stroke-width="1.2"/>
<circle cx="971.3" cy="460.6" r="7.8" fill="#c8c8c8" stroke="#fff" stroke-width="1.2"/>
<circle cx="934.5" cy="347.5" r="7.8" fill="#c8c8c8" stroke="#fff" stroke-width="1.2"/>
<circle cx="634.2" cy="389" r="7.8" fill="#00b4cf" stroke="#fff" stroke-width="0.8"/>
</svg>
<div class="tick" style="left:333px">1<small>PM</small></div>
<div class="tick" style="left:380.8px">1:05<small>PM</small></div>
<div class="tick" style="left:433.6px">1:10<small>PM</small></div>
<div class="tick" style="left:487px">1:15<small>PM</small></div>
<div class="tick" style="left:540px">1:20<small>PM</small></div>
<div class="tick" style="left:592px">1:25<small>PM</small></div>
<div class="tick" style="left:645px">1:30<small>PM</small></div>
<div class="tick" style="left:698px">1:35<small>PM</small></div>
<div class="tick" style="left:752px">1:40<small>PM</small></div>
<div class="tick" style="left:806.5px">1:45<small>PM</small></div>
<div class="tick" style="left:859px">1:50<small>PM</small></div>
<div class="tick" style="left:912px">1:55<small>PM</small></div>
<div class="a" style="left:650px;top:405px;width:123px;height:87px;background:#25292b;border-radius:3px"></div>
<div class="a" style="left:656px;top:411.7px;color:#fff;font-family:'Liberation Mono',monospace;font-weight:bold;font-size:9px;letter-spacing:-0.6px">1:27:36 PM May 12, 2020</div>
<div class="a" style="left:656px;top:426px;width:111px;height:1px;background:#555a5c"></div>
<div class="a" style="left:656px;top:434.7px;width:6px;height:6px;border-radius:1.5px;background:#8fd694"></div>
<div class="a" style="left:669.5px;top:433.4px;color:#fff;font-family:'Liberation Mono',monospace;font-weight:bold;font-size:9px;letter-spacing:-0.1px">EXECUTE:</div>
<div class="a" style="left:700px;width:67px;text-align:right;top:433.4px;color:#fff;font-family:'Liberation Mono',monospace;font-weight:bold;font-size:9px;letter-spacing:-0.5px">0</div>
<div class="a" style="left:656px;top:446.1px;width:6px;height:6px;border-radius:1.5px;background:#f7c325"></div>
<div class="a" style="left:669.5px;top:444.8px;color:#fff;font-family:'Liberation Mono',monospace;font-weight:bold;font-size:9px;letter-spacing:-0.1px">FETCH:</div>
<div class="a" style="left:700px;width:67px;text-align:right;top:444.8px;color:#fff;font-family:'Liberation Mono',monospace;font-weight:bold;font-size:9px;letter-spacing:-0.5px">0</div>
<div class="a" style="left:656px;top:457.4px;width:6px;height:6px;border-radius:1.5px;background:#b97ac8"></div>
<div class="a" style="left:669.5px;top:456.1px;color:#fff;font-family:'Liberation Mono',monospace;font-weight:bold;font-size:9px;letter-spacing:-0.1px">CLOSE:</div>
<div class="a" style="left:700px;width:67px;text-align:right;top:456.1px;color:#fff;font-family:'Liberation Mono',monospace;font-weight:bold;font-size:9px;letter-spacing:-0.5px">0</div>
<div class="a" style="left:656px;top:468.8px;width:6px;height:6px;border-radius:1.5px;background:#a9cae9"></div>
<div class="a" style="left:669.5px;top:467.4px;color:#fff;font-family:'Liberation Mono',monospace;font-weight:bold;font-size:9px;letter-spacing:-0.1px">QUERY:</div>
<div class="a" style="left:700px;width:67px;text-align:right;top:467.4px;color:#fff;font-family:'Liberation Mono',monospace;font-weight:bold;font-size:9px;letter-spacing:-0.5px">2.16 ms</div>
<div class="a" style="left:656px;top:480.1px;width:6px;height:6px;border-radius:1.5px;background:#e0735a"></div>
<div class="a" style="left:669.5px;top:478.8px;color:#fff;font-family:'Liberation Mono',monospace;font-weight:bold;font-size:9px;letter-spacing:-0.1px">PREPARE:</div>
<div class="a" style="left:700px;width:67px;text-align:right;top:478.8px;color:#fff;font-family:'Liberation Mono',monospace;font-weight:bold;font-size:9px;letter-spacing:-0.5px">0</div>
<!-- tags card -->
<div class="card" style="left:113px;top:507px;width:436px;height:140px"></div>
<div class="a" style="left:126.5px;top:528px;color:#76848a;font-size:21px">Tags</div>
<div class="a" style="left:133.5px;top:581.2px;color:#222;font-size:10px;font-weight:bold">4 Tags</div>
<div class="a" style="left:127px;top:607px;width:409px;height:1px;background:#e3e3e3"></div>
<div class="pill" style="left:133px;width:64px">db=admin</div>
<div class="pill" style="left:203px;width:113.5px">origin=127.0.0.1</div>
<div class="pill" style="left:323px;width:113.5px">origin=127_0_0_1</div>

<!-- host breakdown card -->
<div class="card" style="left:563px;top:507px;width:436px;height:140px"></div>
<div class="a" style="left:576.5px;top:530.5px;color:#76848a;font-size:21.3px">Host Breakdown by</div>
<div class="a" style="left:773.5px;top:531px;width:66px;height:26px;background:#f3f3f3;border:1px solid #e5e5e5;border-radius:2px"></div>
<div class="a" style="left:780.5px;top:538.5px;color:#333;font-size:9px">Total Time</div>
<svg class="a" style="left:825px;top:541px" width="8" height="6" viewBox="0 0 8 6"><path d="M1.5 1.5 L4 4 L6.5 1.5" stroke="#2ca8b4" stroke-width="1.2" fill="none"/></svg>
<div class="a" style="left:590px;top:581.2px;color:#222;font-size:10px;font-weight:bold">10 Hosts</div>
<div class="a" style="left:779.5px;top:574px;width:200px;height:26.5px;background:#fff;border:1px solid #e3e3e3;border-radius:2px"></div>
<div class="a" style="left:786.5px;top:581.5px;color:#777;font-size:9px">Filter Hosts</div>
<div class="a" style="left:583px;top:607px;width:396px;height:1px;background:#e3e3e3"></div>
<svg class="a" style="left:592px;top:618px" width="12" height="17" viewBox="0 0 12 17"><path d="M6 1 C8.8 3.5 10.6 6.5 10.6 9.3 C10.6 12 8.5 13.6 6.3 14.6 L6 16.2 L5.7 14.6 C3.5 13.6 1.4 12 1.4 9.3 C1.4 6.5 3.2 3.5 6 1Z" fill="#6f7a7c"/><path d="M6 4 V14" stroke="#8f9a9c" stroke-width="0.5"/></svg>
<div class="a" style="left:619px;top:622px;color:#45abb8;font-size:10px">api7 at 0.0.0.0:27017</div>
<div class="a" style="left:780.5px;top:622.5px;color:#333;font-size:9px;font-family:'Liberation Mono',monospace">21.08 %</div>
<div class="a" style="left:830.5px;top:623px;width:148.5px;height:8px;background:#bdbdbd;border-radius:0 2px 2px 0"></div>
<div class="a" style="left:830.5px;top:623px;width:31.5px;height:8px;background:#2ca8b4"></div>

<!-- chat button -->
<div class="a" style="left:959.2px;top:586.3px;width:40px;height:40px;border-radius:20px;background:#f89c1c;box-shadow:0 0 2px rgba(0,0,0,0.12)"></div>
<svg class="a" style="left:969px;top:595px" width="22" height="23" viewBox="0 0 22 23"><path d="M3 1 H18.1 Q20.1 1 20.1 3 V22 L15 19.4 H3 Q1 19.4 1 17.4 V3 Q1 1 3 1Z" fill="#fff"/><path d="M3.8 14.5 Q10.5 19.5 17.1 14.5" stroke="#f89c1c" stroke-width="1.5" fill="none"/></svg>
</body></html>
